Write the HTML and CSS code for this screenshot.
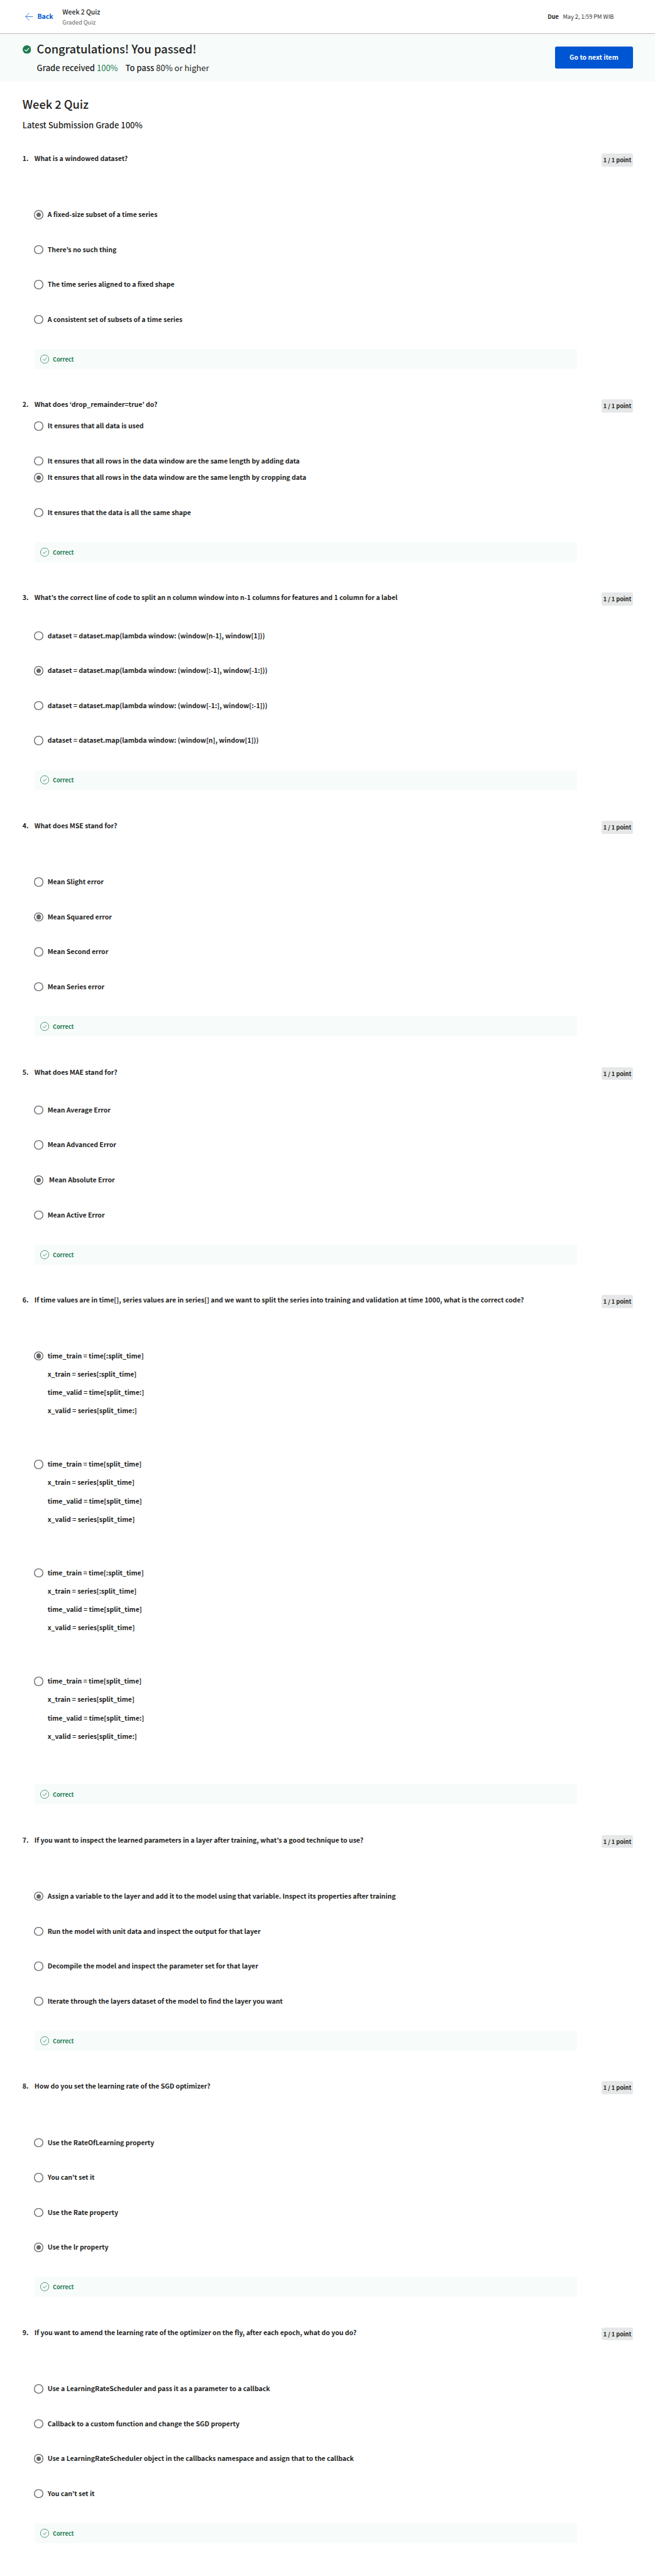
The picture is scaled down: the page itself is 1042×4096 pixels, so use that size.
FILE: index.html
```html
<!DOCTYPE html>
<html lang="en">
<head>
<meta charset="utf-8">
<title>Week 2 Quiz</title>
<link rel="stylesheet" href="styles.css">
</head>
<body>
<svg class="sprite" aria-hidden="true">
  <symbol id="ok" viewBox="0 0 26 26"><circle cx="13" cy="13" r="12.3" fill="none" stroke="#1d7c50" stroke-width="1.4"/><path d="M7.8 12.9l3.9 4.1 7-8" fill="none" stroke="#1d7c50" stroke-width="1.4"/></symbol>
</svg>
<header class="topbar">
  <a class="back"><svg class="arrow" viewBox="0 0 24 24"><path d="M12.3 1 1.3 12l11 11M1.3 12H23" fill="none" stroke="#0056d2" stroke-width="1.4"/></svg>Back</a>
  <div class="heading"><div class="heading-title">Week 2 Quiz</div><div class="heading-sub">Graded Quiz</div></div>
  <div class="due"><b>Due</b><span>May 2, 1:59 PM WIB</span></div>
</header>
<section class="banner">
  <svg class="passed" viewBox="0 0 25 25"><circle cx="12.5" cy="12.5" r="12.5" fill="#1d7c50"/><path d="M5.9 12.6l4.6 4.6 8.3-9" fill="none" stroke="#fff" stroke-width="2.3"/></svg>
  <div class="result">
    <h1>Congratulations! You passed!</h1>
    <p><span class="label">Grade received</span><span class="score">100%</span><span class="label">To pass</span><span>80% or higher</span></p>
  </div>
  <button class="next">Go to next item</button>
</section>
<main>
  <h2>Week 2 Quiz</h2>
  <p class="latest">Latest Submission Grade 100%</p>

  <section class="question">
    <div class="num">1.</div><div class="prompt">What is a windowed dataset?</div><div class="points">1 / 1 point</div>
    <ul class="options">
      <li><i class="radio on"></i>A fixed-size subset of a time series</li>
      <li><i class="radio"></i>There’s no such thing</li>
      <li><i class="radio"></i>The time series aligned to a fixed shape</li>
      <li><i class="radio"></i>A consistent set of subsets of a time series</li>
    </ul>
    <div class="feedback"><svg><use href="#ok"/></svg>Correct</div>
  </section>

  <section class="question tight">
    <div class="num">2.</div><div class="prompt">What does ‘drop_remainder=true’ do?</div><div class="points">1 / 1 point</div>
    <ul class="options">
      <li><i class="radio"></i>It ensures that all data is used</li>
      <li class="close"><i class="radio"></i>It ensures that all rows in the data window are the same length by adding data</li>
      <li><i class="radio on"></i>It ensures that all rows in the data window are the same length by cropping data</li>
      <li><i class="radio"></i>It ensures that the data is all the same shape</li>
    </ul>
    <div class="feedback"><svg><use href="#ok"/></svg>Correct</div>
  </section>

  <section class="question medium">
    <div class="num">3.</div><div class="prompt">What’s the correct line of code to split an n column window into n-1 columns for features and 1 column for a label</div><div class="points">1 / 1 point</div>
    <ul class="options">
      <li><i class="radio"></i>dataset = dataset.map(lambda window: (window[n-1], window[1]))</li>
      <li><i class="radio on"></i>dataset = dataset.map(lambda window: (window[:-1], window[-1:]))</li>
      <li><i class="radio"></i>dataset = dataset.map(lambda window: (window[-1:], window[:-1]))</li>
      <li><i class="radio"></i>dataset = dataset.map(lambda window: (window[n], window[1]))</li>
    </ul>
    <div class="feedback"><svg><use href="#ok"/></svg>Correct</div>
  </section>

  <section class="question">
    <div class="num">4.</div><div class="prompt">What does MSE stand for?</div><div class="points">1 / 1 point</div>
    <ul class="options">
      <li><i class="radio"></i>Mean Slight error</li>
      <li><i class="radio on"></i>Mean Squared error</li>
      <li><i class="radio"></i>Mean Second error</li>
      <li><i class="radio"></i>Mean Series error</li>
    </ul>
    <div class="feedback"><svg><use href="#ok"/></svg>Correct</div>
  </section>

  <section class="question medium">
    <div class="num">5.</div><div class="prompt">What does MAE stand for?</div><div class="points">1 / 1 point</div>
    <ul class="options">
      <li><i class="radio"></i>Mean Average Error</li>
      <li><i class="radio"></i>Mean Advanced Error</li>
      <li><i class="radio on"></i>&nbsp;Mean Absolute Error</li>
      <li><i class="radio"></i>Mean Active Error</li>
    </ul>
    <div class="feedback"><svg><use href="#ok"/></svg>Correct</div>
  </section>

  <section class="question code">
    <div class="num">6.</div><div class="prompt">If time values are in time[], series values are in series[] and we want to split the series into training and validation at time 1000, what is the correct code?</div><div class="points">1 / 1 point</div>
    <ul class="options">
      <li><i class="radio on"></i><div class="lines"><p>time_train = time[:split_time]</p><p>x_train = series[:split_time]</p><p>time_valid = time[split_time:]</p><p>x_valid = series[split_time:]</p></div></li>
      <li><i class="radio"></i><div class="lines"><p>time_train = time[split_time]</p><p>x_train = series[split_time]</p><p>time_valid = time[split_time]</p><p>x_valid = series[split_time]</p></div></li>
      <li><i class="radio"></i><div class="lines"><p>time_train = time[:split_time]</p><p>x_train = series[:split_time]</p><p>time_valid = time[split_time]</p><p>x_valid = series[split_time]</p></div></li>
      <li><i class="radio"></i><div class="lines"><p>time_train = time[split_time]</p><p>x_train = series[split_time]</p><p>time_valid = time[split_time:]</p><p>x_valid = series[split_time:]</p></div></li>
    </ul>
    <div class="feedback"><svg><use href="#ok"/></svg>Correct</div>
  </section>

  <section class="question">
    <div class="num">7.</div><div class="prompt">If you want to inspect the learned parameters in a layer after training, what’s a good technique to use?</div><div class="points">1 / 1 point</div>
    <ul class="options">
      <li><i class="radio on"></i>Assign a variable to the layer and add it to the model using that variable. Inspect its properties after training</li>
      <li><i class="radio"></i>Run the model with unit data and inspect the output for that layer</li>
      <li><i class="radio"></i>Decompile the model and inspect the parameter set for that layer</li>
      <li><i class="radio"></i>Iterate through the layers dataset of the model to find the layer you want</li>
    </ul>
    <div class="feedback"><svg><use href="#ok"/></svg>Correct</div>
  </section>

  <section class="question">
    <div class="num">8.</div><div class="prompt">How do you set the learning rate of the SGD optimizer?</div><div class="points">1 / 1 point</div>
    <ul class="options">
      <li><i class="radio"></i>Use the RateOfLearning property</li>
      <li><i class="radio"></i>You can’t set it</li>
      <li><i class="radio"></i>Use the Rate property</li>
      <li><i class="radio on"></i>Use the lr property</li>
    </ul>
    <div class="feedback"><svg><use href="#ok"/></svg>Correct</div>
  </section>

  <section class="question">
    <div class="num">9.</div><div class="prompt">If you want to amend the learning rate of the optimizer on the fly, after each epoch, what do you do?</div><div class="points">1 / 1 point</div>
    <ul class="options">
      <li><i class="radio"></i>Use a LearningRateScheduler and pass it as a parameter to a callback</li>
      <li><i class="radio"></i>Callback to a custom function and change the SGD property</li>
      <li><i class="radio on"></i>Use a LearningRateScheduler object in the callbacks namespace and assign that to the callback</li>
      <li><i class="radio"></i>You can’t set it</li>
    </ul>
    <div class="feedback"><svg><use href="#ok"/></svg>Correct</div>
  </section>
</main>
</body>
</html>
```
FILE: styles.css
```css
/* 1rem is ten design pixels: the 1920px-wide design fits 1042px */
html { font-size: 5.4270833px; }
* { box-sizing: border-box; margin: 0; padding: 0; }
body {
  width: 192rem;
  height: 754.5rem;
  overflow: hidden;
  background: #fff;
  color: #1f1f1f;
  font-family: "Noto Sans CJK KR", "Noto Sans", sans-serif;
  font-size: 1.932rem;
  font-weight: 700;
  white-space: nowrap;
}
.sprite { display: none; }
svg { display: block; flex: none; }

.topbar {
  display: flex;
  align-items: flex-start;
  height: 9.9rem;
  padding: 0 12.1rem 0 7.3rem;
  border-bottom: 1px solid #bdbdbd;
}
.back {
  display: flex;
  align-items: center;
  gap: 1.25rem;
  width: 11rem;
  height: 9.4rem;
  color: #0056d2;
  font-size: 1.93rem;
  font-weight: 700;
}
.arrow { width: 2.4rem; height: 2.4rem; margin-top: .3rem; }
.heading { padding-top: 1.95rem; line-height: 3rem; }
.heading-title { font-size: 1.92rem; font-weight: 500; }
.heading-sub { font-size: 1.7rem; font-weight: 400; color: #636363; }
.due {
  display: flex;
  gap: 1.2rem;
  margin-left: auto;
  font-size: 1.69rem;
  font-weight: 400;
  line-height: 9.6rem;
  color: #333;
}
.due b { font-size: 1.68rem; font-weight: 700; color: #1f1f1f; }

.banner {
  display: flex;
  align-items: flex-start;
  height: 14rem;
  padding: 0 6.5rem 0 6.6rem;
  background: #f7fbfa;
}
.passed { width: 2.5rem; height: 2.5rem; margin-top: 3.3rem; }
.result { padding: 2.25rem 0 0 1.7rem; }
.result h1 { font-size: 3.37rem; font-weight: 500; line-height: 4.4rem; }
.result p {
  display: flex;
  padding-top: 1.4rem;
  font-size: 2.4rem;
  font-weight: 400;
  line-height: 4rem;
}
.result .label { font-size: 2.39rem; font-weight: 500; margin-right: .55rem; }
.result .score { margin-right: 2.2rem; color: #1d7c50; }
.next {
  width: 22.8rem;
  height: 6.5rem;
  margin: 3.7rem 0 0 auto;
  padding-bottom: .2rem;
  border: 0;
  border-radius: .5rem;
  background: #0056d2;
  color: #fff;
  font: 700 1.92rem "Noto Sans CJK KR", "Noto Sans", sans-serif;
}

main { padding: 4.5rem 6.5rem 0 6.6rem; }
main h2 { font-size: 3.36rem; font-weight: 500; line-height: 4.4rem; }
.latest {
  margin: 1.85rem 0 6.3rem;
  font-size: 2.4rem;
  font-weight: 500;
  line-height: 4rem;
}

.question {
  display: grid;
  grid-template-columns: 3.5rem 1fr 9.1rem;
  grid-template-rows: 2.8rem auto 5.86rem;
  padding-bottom: 8.96rem;
}
.num, .prompt { line-height: 3.05rem; }
.points {
  height: 3.8rem;
  border-radius: .5rem;
  background: #e5e7e8;
  font-size: 1.68rem;
  line-height: 3.8rem;
  text-align: center;
}
.options {
  grid-column: 2 / 4;
  display: flex;
  flex-direction: column;
  gap: 7.57rem;
  padding: 13.83rem 0 7.32rem;
  list-style: none;
}
.options li { display: flex; gap: 1.3rem; line-height: 2.4rem; min-height: 2.67rem; }
.options .close { margin-bottom: -5.4rem; }
.tight .options { padding-top: 3.63rem; }
.medium .options { padding-top: 8.51rem; }
.code .options { gap: 12.95rem; padding: 13.7rem 0 12.72rem; }
.lines { display: grid; grid-template-rows: repeat(4, 2.67rem); gap: 2.72rem; }
.radio {
  flex: none;
  display: flex;
  align-items: center;
  justify-content: center;
  width: 2.67rem;
  height: 2.67rem;
  margin-left: -.12rem;
  border-radius: 50%;
  box-shadow: inset 0 0 0 .25rem #666;
}
.radio.on::after {
  content: "";
  width: 1.36rem;
  height: 1.36rem;
  border-radius: 50%;
  background: #666;
}
.feedback {
  grid-column: 2;
  display: flex;
  align-items: center;
  gap: 1.15rem;
  width: 159.1rem;
  padding-left: 1.62rem;
  background: #f7fbfa;
  color: #1d7c50;
  font-size: 1.68rem;
}
.feedback svg { width: 2.6rem; height: 2.6rem; }
```
